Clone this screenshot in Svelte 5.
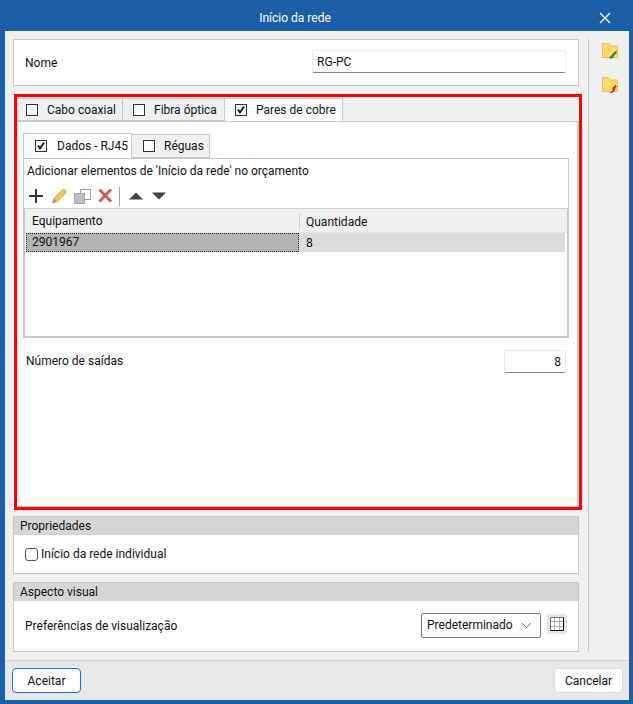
<script>
  let nome = "RG-PC";
  let saidas = "8";
  let individual = false;
</script>

<div class="window">
  <header class="titlebar">
    <span class="title">Início da rede</span>
    <svg class="close" width="12" height="12" viewBox="0 0 12 12"><path d="M1 1l10 10M11 1L1 11" stroke="#fff" stroke-width="1.3" fill="none"/></svg>
  </header>

  <div class="body">
    <div class="main">
      <section class="box nome">
        <span>Nome</span>
        <input class="text" bind:value={nome} />
      </section>

      <section class="highlight">
        <div class="tabs outer">
          <div class="tab"><span class="check"></span>Cabo coaxial</div>
          <div class="tab"><span class="check"></span>Fibra óptica</div>
          <div class="tab active"><span class="check on"><svg width="10" height="10" viewBox="0 0 10 10"><path d="M2 4.500l2 3 4-6" stroke="#111" stroke-width="1.800" fill="none"/></svg></span>Pares de cobre</div>
        </div>
        <div class="tabpanel">
          <div class="tabs inner">
            <div class="tab active"><span class="check on"><svg width="10" height="10" viewBox="0 0 10 10"><path d="M2 4.500l2 3 4-6" stroke="#111" stroke-width="1.800" fill="none"/></svg></span>Dados - RJ45</div>
            <div class="tab"><span class="check"></span>Réguas</div>
          </div>
          <div class="innerpanel">
            <div class="caption">Adicionar elementos de 'Início da rede' no orçamento</div>
            <div class="toolbar">
              <svg width="16" height="16" viewBox="0 0 16 16"><path d="M8 1v14M1 8h14" stroke="#333" stroke-width="2" fill="none"/></svg>
              <svg width="18" height="18" viewBox="0 0 18 18"><path d="M3.500 11.500L12.500 2.500q1.500-1 3 .5t.5 3L7 15z" fill="#f0c850" stroke="#d6bd7c"/><path d="M2 16.500l1.500-5L7 15z" fill="#9a9a8c"/></svg>
              <svg width="18" height="18" viewBox="0 0 18 18"><rect x="6.500" y="2.500" width="10" height="10" fill="#fff" stroke="#a0a0a0"/><rect x=".5" y="6.500" width="10" height="10" fill="#bdbdbd" stroke="#a8a8a8"/></svg>
              <svg width="16" height="16" viewBox="0 0 16 16"><path d="M1.500 1.500l11.500 12M13 1.500L1.500 13.500" stroke="#d25a5a" stroke-width="3" fill="none"/></svg>
              <span class="sep"></span>
              <svg class="up" width="14" height="10" viewBox="0 0 14 10"><path d="M7 1.500L14 8.500H0z" fill="#444"/></svg>
              <svg class="down" width="14" height="10" viewBox="0 0 14 10"><path d="M0 1.500h14L7 8.500z" fill="#444"/></svg>
            </div>
            <div class="table">
              <div class="row head">
                <div class="col1">Equipamento</div>
                <div class="col2">Quantidade</div>
              </div>
              <div class="row data">
                <div class="col1 current">2901967</div>
                <div class="col2">8</div>
              </div>
            </div>
            <div class="saidas">
              <span>Número de saídas</span>
              <input class="text num" bind:value={saidas} />
            </div>
          </div>
        </div>
      </section>

      <section class="box group props">
        <h3>Propriedades</h3>
        <label class="content">
          <input type="checkbox" bind:checked={individual} />
          <span>Início da rede individual</span>
        </label>
      </section>

      <section class="box group visual">
        <h3>Aspecto visual</h3>
        <div class="content">
          <span>Preferências de visualização</span>
          <div class="select">Predeterminado
            <svg width="11" height="7" viewBox="0 0 11 7"><path d="M1 1l4.500 4.500L10 1" stroke="#666" fill="none"/></svg>
          </div>
          <div class="gridbtn">
            <svg width="14" height="14" viewBox="0 0 14 14"><rect width="14" height="14" fill="#fff"/><path d="M.5 4.500h13M.5 9.500h13M4.500 .5v13M9.500 .5v13" stroke="#a9a5d8" fill="none"/><path d="M.5 13.500V.5h13" stroke="#777" fill="none"/><path d="M.5 13.500h13V.5" stroke="#000" fill="none"/></svg>
          </div>
        </div>
      </section>
    </div>

    <aside class="side">
      <svg width="16" height="16" viewBox="0 0 16 16"><path d="M.5 14.500V.5h6l1.500 2.500h7.500V14.500z" fill="#ffdc5e" stroke="#f2bd63"/><path d="M7 15.500c.3-1.500 1.300-3 3-3.500.8-2 2.300-3.500 5-4.500-.5 1.500-.8 2.500-.5 3.500l-2 1c0 1.500-1.500 3-3 3.500z" fill="#1f9060"/></svg>
      <svg width="16" height="16" viewBox="0 0 16 16"><path d="M.5 14.500V.5h6l1.500 2.500h7.500V14.500z" fill="#ffdc5e" stroke="#f2bd63"/><path d="M7 15.500l2.500-1c1-.5 1.500-1.500 1.500-2.500l-1-.5 3.500-3.500 1.500 1.500-1.500 1c0 2.500-1.500 4.500-4 5.500z" fill="#d8142c"/></svg>
    </aside>
  </div>

  <footer class="footer">
    <button class="btn primary">Aceitar</button>
    <button class="btn">Cancelar</button>
  </footer>
</div>

<style>
  :global(body) {
    margin: 0;
  }

  .window {
    width: 633px;
    height: 704px;
    box-sizing: border-box;
    background: #1a5fa8;
    padding: 0 4px 4px 5px;
    display: flex;
    flex-direction: column;
    font-family: Roboto, "Open Sans", sans-serif;
    font-size: 12px;
    color: #111;
  }

  .titlebar {
    height: 31px;
    box-sizing: border-box;
    flex: none;
    display: flex;
    align-items: center;
    justify-content: center;
    position: relative;
    color: #fff;
    padding: 4px 44px 0 0;
  }

  .close {
    position: absolute;
    right: 18px;
    top: 12px;
  }

  .body {
    flex: 1;
    background: #f0f0f0;
    display: flex;
    padding: 8px 0 8px 8px;
    min-height: 0;
  }

  .main {
    width: 566px;
    display: flex;
    flex-direction: column;
  }

  .box {
    background: #fff;
    border: 1px solid #c8c8c8;
    box-sizing: border-box;
  }

  .nome {
    height: 47px;
    display: flex;
    align-items: center;
    justify-content: space-between;
    padding: 0 12px 0 11px;
    flex: none;
  }

  .text {
    font: inherit;
    color: inherit;
    box-sizing: border-box;
    background: #fff;
    border: 1px solid #ececec;
    border-bottom: 1px solid #848484;
    border-radius: 2px;
    outline: none;
    width: 254px;
    height: 23px;
    padding: 0 4px;
  }

  .nome .text {
    margin-bottom: 2px;
  }

  .highlight {
    flex: none;
    height: 416px;
    box-sizing: border-box;
    margin: 8px -3px 6px 1px;
    border: 3px solid #ff0000;
    padding-top: 1px;
    display: flex;
    flex-direction: column;
  }

  .tabs {
    display: flex;
    flex: none;
  }

  .tab {
    display: flex;
    align-items: center;
    box-sizing: border-box;
    border: 1px solid #c8c8c8;
    border-left: 0;
    background: #f0f0f0;
  }

  .tab.active {
    background: #fff;
  }

  .check {
    width: 10px;
    height: 10px;
    border: 1px solid #333;
    background: #fff;
    display: flex;
    flex: none;
    margin-right: 9px;
  }

  .check.on {
    background: #f4f4f4;
  }

  .outer .tab {
    height: 23px;
    padding-left: 9px;
    margin-bottom: -1px;
  }

  .outer .tab:nth-child(1) { width: 106px; }
  .outer .tab:nth-child(2) { width: 102px; padding-left: 10px; }
  .outer .tab:nth-child(3) { width: 118px; padding-left: 10px; border-bottom-color: #fff; position: relative; }

  .tabpanel {
    flex: 1;
    background: #fff;
    border-top: 1px solid #c8c8c8;
    border-bottom: 1px solid #c8c8c8;
    border-right: 2px solid #c8c8c8;
    margin-top: 1px;
    padding: 11px 8px 0 6px;
    min-height: 0;
  }

  .inner .tab {
    background: #f0f0f0;
  }

  .inner .tab:nth-child(1) {
    width: 109px;
    height: 25px;
    padding-left: 11px;
    border-left: 1px solid #c8c8c8;
    background: #fff;
    border-bottom-color: #fff;
    margin-bottom: -1px;
    position: relative;
  }

  .inner .tab:nth-child(1) .check {
    margin-right: 10px;
  }

  .inner .tab:nth-child(2) {
    width: 78px;
    padding-left: 11px;
    margin-top: 1px;
    height: 24px;
  }

  .caption {
    border-top: 1px solid #c8c8c8;
    border-left: 1px solid #c8c8c8;
    border-right: 1px solid #c8c8c8;
    padding: 5px 0 0 3px;
    height: 20px;
  }

  .toolbar {
    display: flex;
    align-items: center;
    gap: 6px;
    height: 24px;
    padding-left: 4px;
    border-left: 1px solid #c8c8c8;
    border-right: 1px solid #c8c8c8;
  }

  .sep {
    width: 1px;
    height: 19px;
    background: #a0a0a0;
    margin: 0 3px 0 -1px;
  }

  .down {
    margin-left: 3px;
  }

  .table {
    height: 130px;
    box-sizing: border-box;
    border: 2px solid #c8c8c8;
    border-top-width: 1px;
    border-top-color: #d0d0d0;
  }

  .row {
    display: flex;
    align-items: center;
  }

  .head {
    height: 24px;
    background: #f0f0f0;
    border-bottom: 1px solid #e4e4e4;
    box-sizing: border-box;
    padding-top: 2px;
  }

  .col1 {
    width: 275px;
    padding-left: 7px;
    box-sizing: border-box;
  }

  .col2 {
    flex: 1;
    padding-left: 6px;
  }

  .head .col1 {
    border-right: 1px solid #d4d4d4;
    height: 17px;
    line-height: 17px;
  }

  .data {
    height: 19px;
    background: #dcdcdc;
    margin: 0 2px 0 1px;
  }

  .data .col2 {
    padding-left: 7px;
  }

  .current {
    height: 19px;
    line-height: 19px;
    background: #b4b4b4;
    outline: 1px dotted #222;
    outline-offset: -1px;
    padding-left: 6px;
    width: 273px;
  }

  .saidas {
    display: flex;
    align-items: center;
    justify-content: space-between;
    padding: 12px 3px 0 3px;
  }

  .saidas span {
    margin-bottom: 2px;
  }

  .num {
    width: 62px;
    height: 23px;
    text-align: right;
  }

  .group {
    display: flex;
    flex-direction: column;
    flex: none;
  }

  h3 {
    margin: 0;
    font: inherit;
    height: 18px;
    line-height: 19px;
    background: #d6d6d6;
    padding-left: 6px;
    flex: none;
  }

  .props {
    height: 58px;
    margin-bottom: 8px;
  }

  .visual {
    height: 70px;
  }

  .content {
    flex: 1;
    display: flex;
    align-items: center;
  }

  .props .content {
    padding-left: 11px;
    gap: 3px;
  }

  .props input {
    width: 13px;
    height: 13px;
    margin: 0;
    appearance: none;
    border: 1px solid #555;
    border-radius: 3px;
    background: #fff;
  }

  .visual .content {
    padding: 0 25px 0 11px;
  }

  .select {
    margin: 0 0 2px auto;
    width: 120px;
    height: 25px;
    box-sizing: border-box;
    border: 1px solid #7a7a7a;
    border-radius: 2px;
    display: flex;
    align-items: center;
    justify-content: space-between;
    padding: 0 8px 0 5px;
  }

  .gridbtn {
    width: 20px;
    height: 20px;
    margin: -3px -14px 2px 6px;
    background: #e6e6e6;
    display: flex;
    align-items: center;
    justify-content: center;
  }

  .side {
    flex: 1;
    border-left: 1px solid #c8c8c8;
    margin: 0 0 0 9px;
    display: flex;
    flex-direction: column;
    align-items: center;
    gap: 18px;
    padding: 4px 0 0 1px;
  }

  .footer {
    flex: none;
    height: 40px;
    box-sizing: border-box;
    background: #e8e8e8;
    border-top: 1px solid #d0d0d0;
    display: flex;
    align-items: center;
    justify-content: space-between;
    padding: 0 6px 0 7px;
  }

  .btn {
    font: inherit;
    color: inherit;
    width: 69px;
    height: 25px;
    background: #fff;
    border: 1px solid #dcdcdc;
    border-radius: 4px;
    padding: 0;
  }

  .btn.primary {
    border-color: #0a78d4;
  }
</style>
